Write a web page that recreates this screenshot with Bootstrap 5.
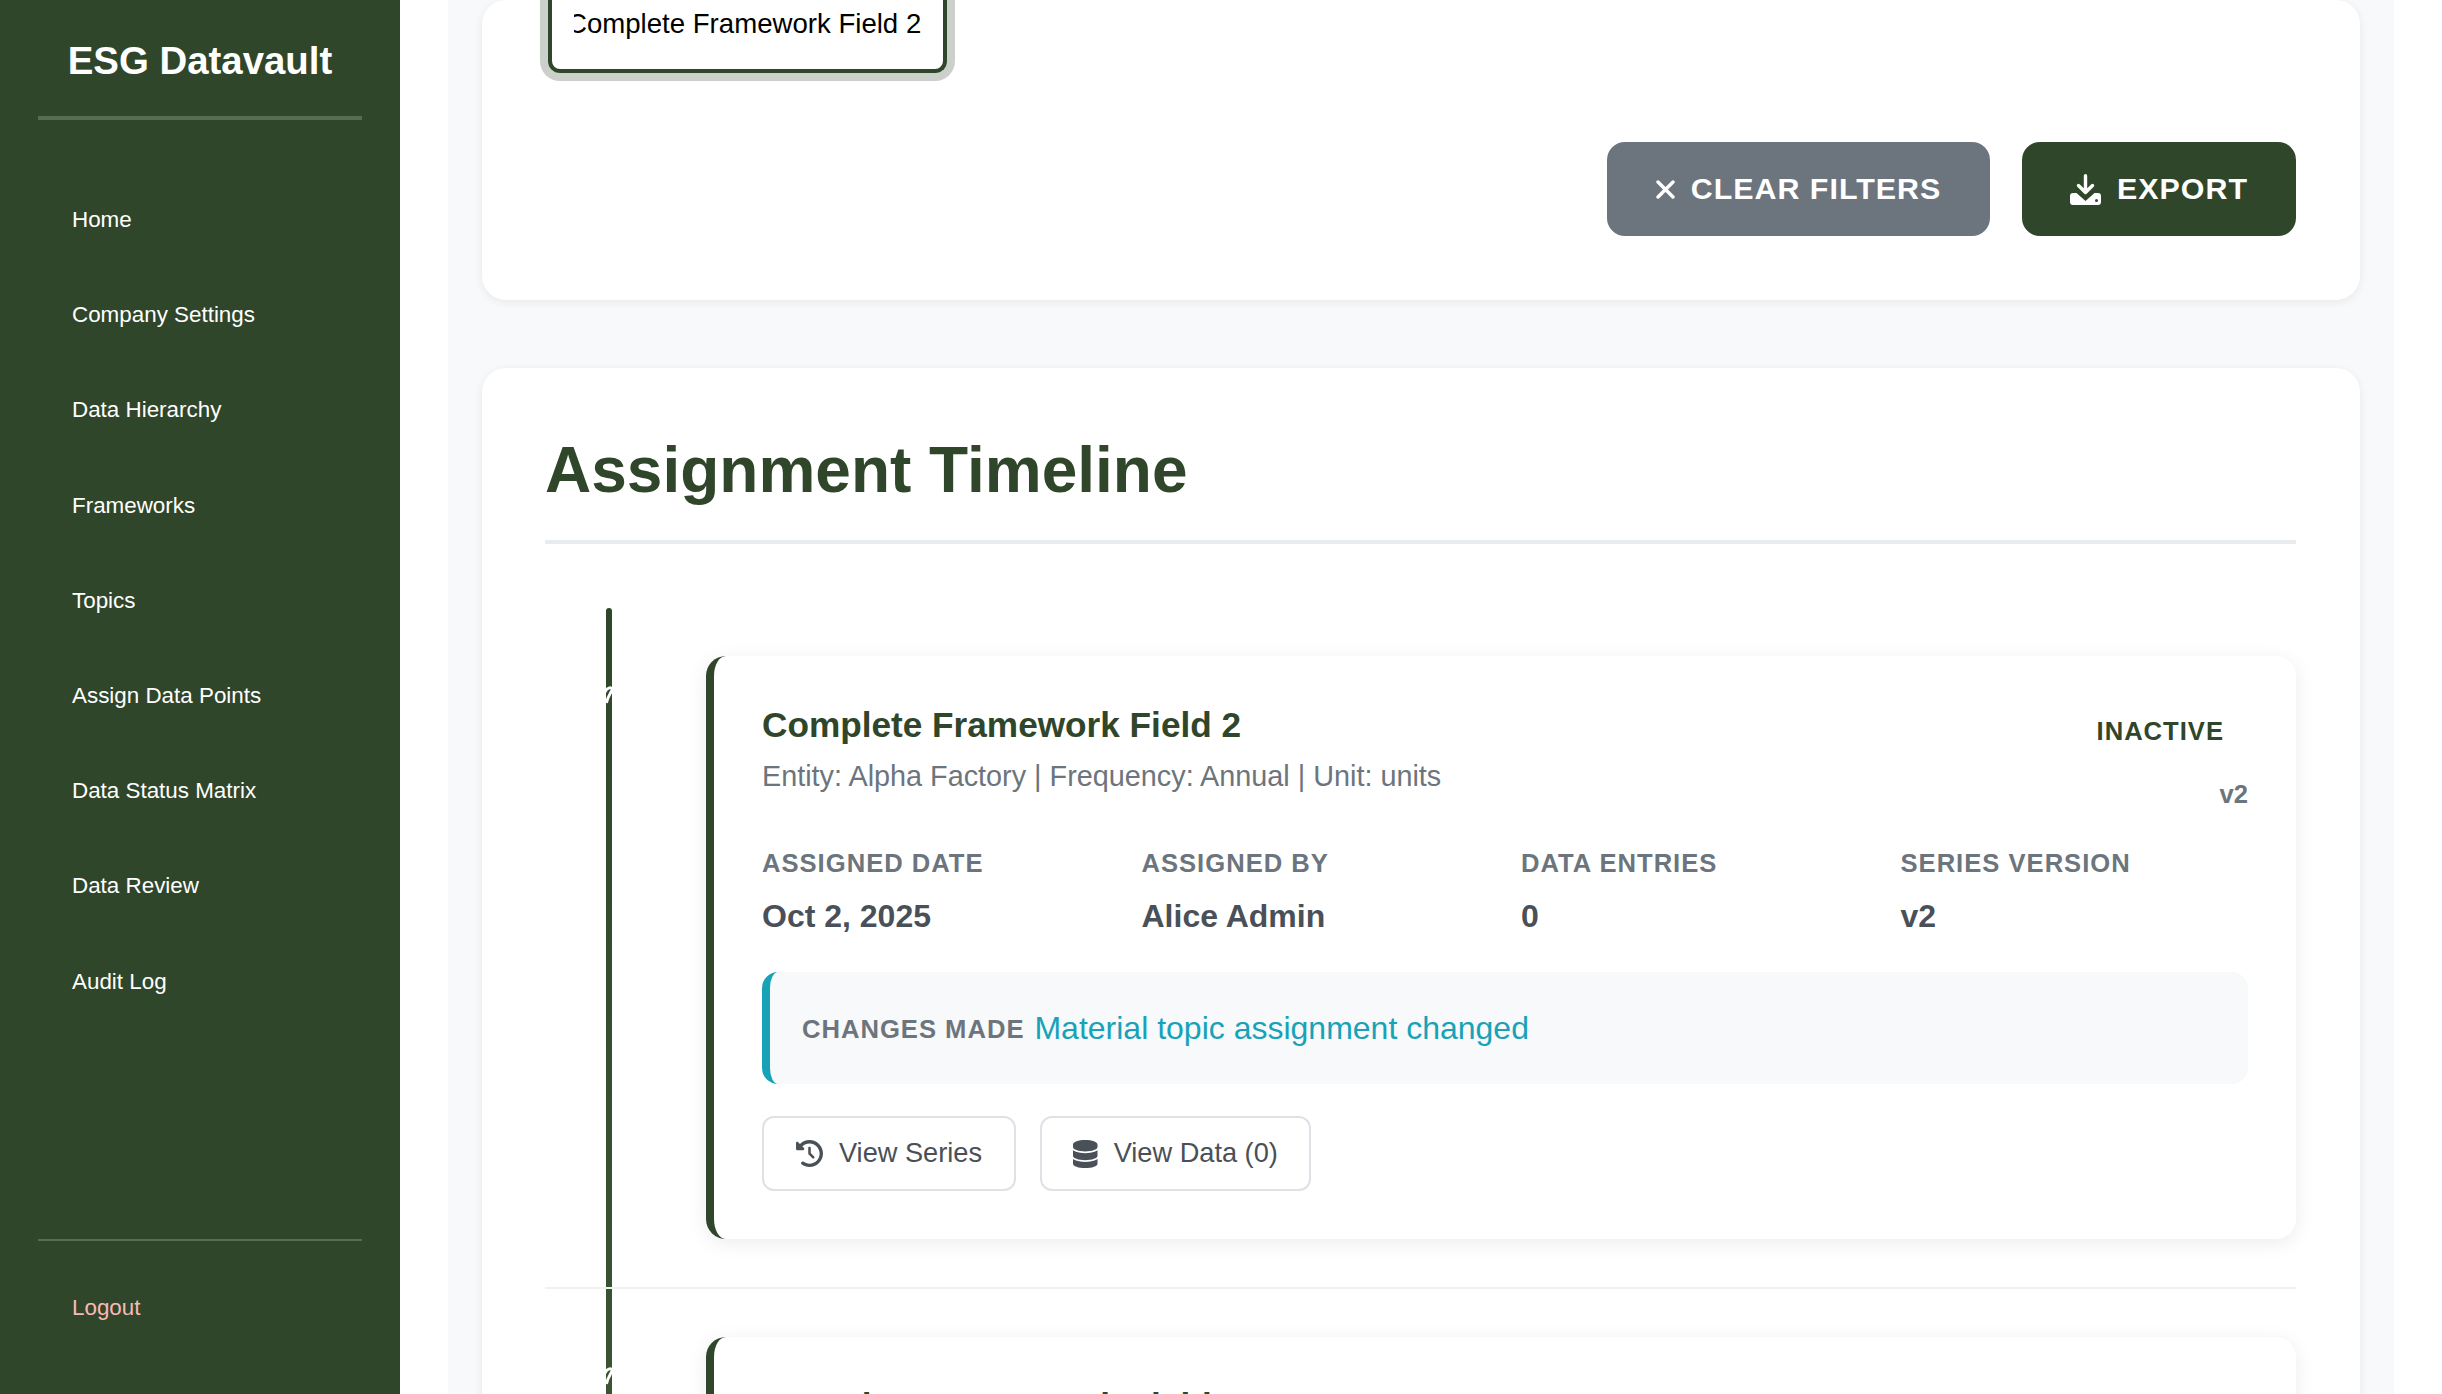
<!DOCTYPE html>
<html lang="en">
<head>
<meta charset="UTF-8" />
<meta name="viewport" content="width=device-width, initial-scale=1.0" />
<title>Assignment Timeline - ESG Datavault</title>
<link href="https://cdn.jsdelivr.net/npm/bootstrap@5.3.0/dist/css/bootstrap.min.css" rel="stylesheet" />
<style>
html, body { height: 100%; overflow: hidden; }
body { font-family: "Liberation Sans", Arial, sans-serif; background: #fff; }
.app-shell { height: 100vh; overflow: hidden; }

/* sidebar */
.side-bar { width: 400px; flex: 0 0 400px; background: #30462a; color: #fff; padding: 0 38px; }
.side-title { font-size: 38.4px; font-weight: 700; line-height: 44px; text-align: center; padding-top: 39px; padding-bottom: 33px; border-bottom: 4px solid rgba(255,255,255,.2); margin-bottom: 52px; }
.side-link { display: block; color: #fff; font-size: 22.4px; line-height: 27.2px; padding: 34px 34px; text-decoration: none; }
.side-foot { margin-top: auto; border-top: 2px solid rgba(255,255,255,.2); padding-top: 19px; padding-bottom: 38.800px; }
.side-foot .side-link { color: #f8b9b9; }

/* main area, page is scrolled down a bit */
.main-wrap { flex: 1 1 auto; min-width: 0; padding: 0 48px; overflow: hidden; }
.main-inner { background: #f8f9fa; padding: 0 34px; height: 100%; }
.panel-box { background: #fff; border-radius: 24px; box-shadow: 0 2px 10px rgba(0,0,0,.07); padding: 0 64px 0 63px; }
.filter-panel { height: 300px; margin-bottom: 68px; padding-bottom: 64px; }
.pick-box { width: 399px; height: 73px; margin-left: 3px; margin-bottom: 69px; background: #fff; border: 4px solid #30462a; border-top: 0; border-radius: 0 0 12px 12px; box-shadow: 0 0 0 8px rgba(48,70,42,.25); padding: 8px 10px 0 22px; overflow: hidden; clip-path: inset(0 -8px -8px -8px); }
.pick-text { display: block; overflow: hidden; white-space: nowrap; font-size: 27.6px; line-height: 32px; color: #000; }
.pick-text span { display: block; margin-left: -7px; }
.tool-btn { height: 94px; border-radius: 18px; font-size: 30.4px; font-weight: 700; letter-spacing: 1px; color: #fff; border: 0; padding: 0; }
.tool-btn:hover { color: #fff; }
.btn-clear { width: 383px; background: #6c757d; }
.btn-export { width: 274px; background: #30462a; }
.tool-row { gap: 32px; }

.timeline-panel { padding-top: 65px; min-height: 1400px; }
.timeline-title { font-size: 64px; font-weight: 700; line-height: 74px; color: #30462a; padding-bottom: 33px; border-bottom: 4px solid #e9ecef; margin-bottom: 0; }
.timeline-body { padding-top: 64px; }
.timeline-rail { left: 61px; top: 64px; bottom: -600px; width: 6px; border-radius: 3px; background: linear-gradient(to bottom, #30462a, #4a6b41 130%); }
.timeline-row { padding-left: 161px; padding-top: 48px; padding-bottom: 48px; border-bottom: 2px solid #f1f1f1; }
.rail-mark { left: 60px; top: 78px; width: 8px; height: 20px; }
.assign-card { background: #fff; border-left: 8px solid #30462a; border-radius: 20px; box-shadow: 0 4px 20px rgba(0,0,0,.08); padding: 48px; }
.assign-name { font-size: 35.2px; font-weight: 700; line-height: 42px; color: #30462a; margin-bottom: 14px; }
.assign-sub { font-size: 28.8px; line-height: 32px; color: #6c757d; }
.state-tag { font-size: 25.6px; font-weight: 700; letter-spacing: 1px; color: #30462a; padding-right: 24px; line-height: 30px; margin-top: 12px; }
.ver-tag { font-size: 25.6px; font-weight: 700; color: #6c757d; line-height: 28px; margin-top: 34px; }
.meta-grid { display: grid; grid-template-columns: repeat(4, 1fr); gap: 32px; margin-top: 40px; }
.meta-label { font-size: 25.6px; font-weight: 700; letter-spacing: 1px; color: #6c757d; line-height: 30px; margin-bottom: 19px; }
.meta-value { font-size: 32px; font-weight: 700; color: #495057; line-height: 38px; }
.change-box { background: #f8f9fa; border-left: 8px solid #17a2b8; border-radius: 16px; height: 112px; padding: 0 32px; margin-top: 37px; margin-bottom: 32px; gap: 10px; }
.change-label { font-size: 25.6px; font-weight: 700; letter-spacing: 1px; color: #6c757d; margin-top: 2px; }
.change-text { font-size: 32px; color: #17a2b8; }
.line-btn { height: 75px; border: 2px solid #dee2e6; border-radius: 12px; background: #fff; color: #495057; font-size: 27.2px; padding: 0; }
.line-btn:hover { color: #495057; background: #fff; border-color: #dee2e6; }
.btn-series { width: 254px; }
.btn-data { width: 271px; }
</style>
</head>
<body>
<div class="d-flex app-shell">
	<aside class="side-bar d-flex flex-column">
		<div class="side-title">ESG Datavault</div>
		<nav class="d-flex flex-column">
			<a class="side-link" href="#">Home</a>
			<a class="side-link" href="#">Company Settings</a>
			<a class="side-link" href="#">Data Hierarchy</a>
			<a class="side-link" href="#">Frameworks</a>
			<a class="side-link" href="#">Topics</a>
			<a class="side-link" href="#">Assign Data Points</a>
			<a class="side-link" href="#">Data Status Matrix</a>
			<a class="side-link" href="#">Data Review</a>
			<a class="side-link" href="#">Audit Log</a>
		</nav>
		<div class="side-foot">
			<a class="side-link" href="#">Logout</a>
		</div>
	</aside>

	<main class="main-wrap">
		<div class="main-inner">
			<section class="panel-box filter-panel">
				<div class="pick-box">
					<div class="pick-text"><span>Complete Framework Field 2</span></div>
				</div>
				<div class="d-flex justify-content-end tool-row">
					<button type="button" class="btn tool-btn btn-clear d-inline-flex align-items-center justify-content-center gap-3">
						<svg width="19" height="19" viewBox="0 0 19 19" fill="none" stroke="#fff" stroke-width="3.4" stroke-linecap="round"><path d="M2 2 17 17M17 2 2 17" /></svg>
						CLEAR FILTERS
					</button>
					<button type="button" class="btn tool-btn btn-export d-inline-flex align-items-center justify-content-center gap-3">
						<svg width="31" height="31" viewBox="0 0 31 31"><path d="M15.500 1.700V18.500M8.500 11.500l7 7 7-7" fill="none" stroke="#fff" stroke-width="3.400" stroke-linecap="round" stroke-linejoin="round" /><path fill="#fff" fill-rule="evenodd" d="M3 19h3.500l9 8 9-8H28a3 3 0 0 1 3 3v6a3 3 0 0 1-3 3H3a3 3 0 0 1-3-3v-6a3 3 0 0 1 3-3zm23.500 6a1.500 1.500 0 1 0 0 3 1.500 1.500 0 0 0 0-3z" /></svg>
						EXPORT
					</button>
				</div>
			</section>

			<section class="panel-box timeline-panel">
				<h2 class="timeline-title">Assignment Timeline</h2>
				<div class="timeline-body position-relative">
					<div class="timeline-rail position-absolute"></div>

					<div class="timeline-row position-relative">
						<svg class="rail-mark position-absolute" viewBox="0 0 8 20" fill="none" stroke="#fff" stroke-width="2.800"><path d="M0 6C2 2 6 .5 7 3 7.500 5 3 9 1.500 17" /></svg>
						<div class="assign-card">
							<div class="d-flex justify-content-between align-items-start">
								<div>
									<div class="assign-name">Complete Framework Field 2</div>
									<div class="assign-sub">Entity: Alpha Factory | Frequency: Annual | Unit: units</div>
								</div>
								<div class="d-flex flex-column align-items-end">
									<div class="state-tag">INACTIVE</div>
									<div class="ver-tag">v2</div>
								</div>
							</div>
							<div class="meta-grid">
								<div><div class="meta-label">ASSIGNED DATE</div><div class="meta-value">Oct 2, 2025</div></div>
								<div><div class="meta-label">ASSIGNED BY</div><div class="meta-value">Alice Admin</div></div>
								<div><div class="meta-label">DATA ENTRIES</div><div class="meta-value">0</div></div>
								<div><div class="meta-label">SERIES VERSION</div><div class="meta-value">v2</div></div>
							</div>
							<div class="change-box d-flex align-items-center">
								<span class="change-label">CHANGES MADE</span>
								<span class="change-text">Material topic assignment changed</span>
							</div>
							<div class="d-flex gap-4">
								<button type="button" class="btn line-btn btn-series d-inline-flex align-items-center justify-content-center gap-3">
									<svg width="27" height="27" viewBox="0 0 512 512" fill="#495057"><path d="M75 75L41 41C25.900 25.900 0 36.600 0 57.900V168c0 13.300 10.700 24 24 24H134.100c21.400 0 32.100-25.900 17-41l-30.800-30.800C155 85.500 203 64 256 64c106 0 192 86 192 192s-86 192-192 192c-40.800 0-78.600-12.700-109.700-34.400c-14.500-10.100-34.400-6.600-44.600 7.900s-6.600 34.400 7.900 44.600C151.200 495 201.700 512 256 512c141.400 0 256-114.600 256-256S397.400 0 256 0C185.300 0 121.300 28.700 75 75zm181 53c-13.300 0-24 10.700-24 24V256c0 6.400 2.500 12.500 7 17l72 72c9.400 9.400 24.600 9.400 33.900 0s9.400-24.600 0-33.900l-65-65V152c0-13.300-10.700-24-24-24z" /></svg>
									View Series
								</button>
								<button type="button" class="btn line-btn btn-data d-inline-flex align-items-center justify-content-center gap-3">
									<svg width="24.500" height="28" viewBox="0 0 448 512" fill="#495057"><path d="M448 80v48c0 44.200-100.300 80-224 80S0 172.200 0 128V80C0 35.800 100.300 0 224 0S448 35.800 448 80zM393.200 214.700c20.800-7.400 39.900-16.900 54.800-28.600V288c0 44.200-100.300 80-224 80S0 332.200 0 288V186.100c14.900 11.800 34 21.200 54.800 28.600C99.700 230.700 159.500 240 224 240s124.300-9.300 169.200-25.300zM0 346.100c14.900 11.800 34 21.200 54.800 28.600C99.700 390.700 159.500 400 224 400s124.300-9.300 169.200-25.300c20.800-7.400 39.900-16.900 54.800-28.600V432c0 44.200-100.300 80-224 80S0 476.200 0 432V346.100z" /></svg>
									View Data (0)
								</button>
							</div>
						</div>
					</div>

					<div class="timeline-row position-relative">
						<svg class="rail-mark position-absolute" viewBox="0 0 8 20" fill="none" stroke="#fff" stroke-width="2.800"><path d="M0 6C2 2 6 .5 7 3 7.500 5 3 9 1.500 17" /></svg>
						<div class="assign-card">
							<div class="assign-name">Complete Framework Field 2</div>
						</div>
					</div>
				</div>
			</section>
		</div>
	</main>
</div>
</body>
</html>
